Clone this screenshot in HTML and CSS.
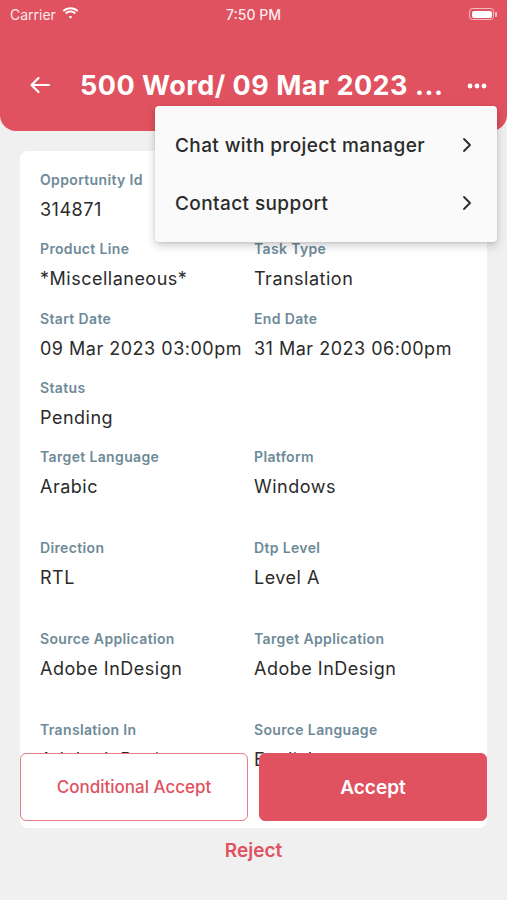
FILE: index.html
```html
<!DOCTYPE html>
<html>
<head>
<meta charset="utf-8">
<link rel="stylesheet" href="styles.css">
</head>
<body>
<div class="screen">
  <header class="header">
    <div class="statusbar">
      <div class="sb-left">Carrier
        <svg class="wifi" width="17" height="12" viewBox="0 0 17 12"><path d="M8.5 2.2c2.5 0 4.8 1 6.5 2.6l1.3-1.4C14.3 1.4 11.5.2 8.5.2S2.7 1.4.7 3.4L2 4.8C3.7 3.2 6 2.2 8.5 2.2z" fill="#fff"/><path d="M8.5 5.6c1.6 0 3 .6 4.1 1.6l1.3-1.4C12.5 4.5 10.6 3.6 8.5 3.6S4.5 4.5 3.1 5.8l1.3 1.4c1.1-1 2.5-1.6 4.1-1.6z" fill="#fff"/><path d="M8.5 8.9c.8 0 1.4.3 1.9.7L8.5 11.8 6.6 9.6c.5-.4 1.1-.7 1.9-.7z" fill="#fff"/></svg>
      </div>
      <div class="sb-time">7:50 PM</div>
      <div class="sb-right">
        <span class="battery"><span class="battery-fill"></span></span><span class="battery-tip"></span>
      </div>
    </div>
    <div class="navbar">
      <svg class="back" width="22" height="18" viewBox="0 0 22 18"><path d="M20 9H2.5M9.5 2L2.5 9l7 7" stroke="#fff" stroke-width="2.2" fill="none" stroke-linecap="round" stroke-linejoin="round"/></svg>
      <h1 class="title">500 Word/ 09 Mar 2023 ...</h1>
      <svg class="more" width="20" height="6" viewBox="0 0 20 6"><circle cx="3" cy="3" r="2.4" fill="#fff"/><circle cx="10" cy="3" r="2.4" fill="#fff"/><circle cx="17" cy="3" r="2.4" fill="#fff"/></svg>
    </div>
  </header>

  <main class="content">
    <div class="card">
      <div class="fields">
        <div class="field"><div class="label">Opportunity Id</div><div class="value">314871</div></div>
        <div class="field"></div>
        <div class="field"><div class="label">Product Line</div><div class="value">*Miscellaneous*</div></div>
        <div class="field"><div class="label">Task Type</div><div class="value">Translation</div></div>
        <div class="field"><div class="label">Start Date</div><div class="value">09 Mar 2023 03:00pm</div></div>
        <div class="field"><div class="label">End Date</div><div class="value">31 Mar 2023 06:00pm</div></div>
        <div class="field"><div class="label">Status</div><div class="value">Pending</div></div>
        <div class="field"></div>
        <div class="field tall"><div class="label">Target Language</div><div class="value">Arabic</div></div>
        <div class="field tall"><div class="label">Platform</div><div class="value">Windows</div></div>
        <div class="field tall"><div class="label">Direction</div><div class="value">RTL</div></div>
        <div class="field tall"><div class="label">Dtp Level</div><div class="value">Level A</div></div>
        <div class="field tall"><div class="label">Source Application</div><div class="value">Adobe InDesign</div></div>
        <div class="field tall"><div class="label">Target Application</div><div class="value">Adobe InDesign</div></div>
        <div class="field tall"><div class="label">Translation In</div><div class="value">Adobe InDesign</div></div>
        <div class="field tall"><div class="label">Source Language</div><div class="value">English</div></div>
      </div>
      <div class="actions">
        <button class="btn btn-outline">Conditional Accept</button>
        <button class="btn btn-fill">Accept</button>
      </div>
    </div>
    <div class="reject">Reject</div>
  </main>

  <div class="menu">
    <div class="menu-item"><span>Chat with project manager</span>
      <svg width="10" height="16" viewBox="0 0 10 16"><path d="M2 2l6 6-6 6" stroke="#2b2b2b" stroke-width="1.8" fill="none" stroke-linecap="round" stroke-linejoin="round"/></svg>
    </div>
    <div class="menu-item"><span>Contact support</span>
      <svg width="10" height="16" viewBox="0 0 10 16"><path d="M2 2l6 6-6 6" stroke="#2b2b2b" stroke-width="1.8" fill="none" stroke-linecap="round" stroke-linejoin="round"/></svg>
    </div>
  </div>
</div>
</body>
</html>
```

FILE: styles.css
```css
* { box-sizing: border-box; }
html, body { margin: 0; padding: 0; }
body {
  background: #f0f0f0;
  font-family: Inter, "Noto Sans", sans-serif;
  color: #2b2b2b;
}
.screen {
  position: relative;
  width: 507px;
  height: 900px;
  overflow: hidden;
  background: #f0f0f0;
}
.header {
  background: #e0525f;
  height: 131px;
  border-radius: 0 0 16px 16px;
  color: #fff;
}
.statusbar {
  height: 28px;
  display: flex;
  align-items: center;
  justify-content: space-between;
  padding: 0 10px 0 10px;
  font-size: 14px;
  color: rgba(255,255,255,0.9);
  position: relative;
}
.sb-left { display: flex; align-items: center; gap: 6px; }
.wifi { margin-top: -2px; }
.sb-time {
  position: absolute;
  left: 0; right: 0;
  text-align: center;
  font-weight: 500;
}
.sb-right { display: flex; align-items: center; }
.battery {
  width: 25px; height: 12px;
  border: 1px solid rgba(255,255,255,0.6);
  border-radius: 3.5px;
  padding: 1.5px;
  display: flex;
}
.battery-fill { flex: 1; background: #fff; border-radius: 2px; }
.battery-tip {
  width: 2px; height: 5px;
  background: rgba(255,255,255,0.6);
  border-radius: 0 1px 1px 0;
  margin-left: 1px;
}
.navbar {
  display: flex;
  align-items: center;
  height: 58px;
  padding: 56px 20px 0 29px;
}
.back { flex: none; }
.title {
  margin: 0 0 0 29px;
  font-size: 27px;
  font-weight: 700;
  letter-spacing: 0.5px;
  flex: 1;
  white-space: nowrap;
}
.more { flex: none; margin-top: 2px; }

.content {
  padding: 20px 20px 0 20px;
}
.card {
  position: relative;
  background: #fff;
  border-radius: 8px;
  height: 677px;
  overflow: hidden;
}
.fields {
  display: grid;
  grid-template-columns: 214px 1fr;
  padding: 20px 20px 0 20px;
}
.field { height: 69.3px; }
.field.tall { height: 91px; }
.label {
  font-size: 14px;
  font-weight: 600;
  color: #6e8a98;
  line-height: 17px;
  letter-spacing: 0.35px;
}
.value {
  font-size: 18px;
  color: #2b2b2b;
  margin-top: 11px;
  line-height: 22px;
  letter-spacing: 0.5px;
}
.actions {
  position: absolute;
  left: 0; right: 0; bottom: 7px;
  display: grid;
  grid-template-columns: 1fr 1fr;
  gap: 11px;
}
.btn {
  height: 68px;
  border-radius: 6px;
  font-family: inherit;
  font-size: 17px;
  font-weight: 500;
  cursor: pointer;
}
.btn-outline {
  background: #fff;
  border: 1.5px solid #e57b85;
  color: #e0525f;
}
.btn-fill {
  background: #e0525f;
  border: 1.5px solid #e0525f;
  color: #fff;
  font-size: 19px;
  font-weight: 600;
}
.reject {
  text-align: center;
  color: #e0525f;
  font-size: 19px;
  font-weight: 600;
  margin-top: 11px;
}

.menu {
  position: absolute;
  left: 155px;
  top: 106px;
  width: 342px;
  height: 136px;
  background: #fafafa;
  border-radius: 4px;
  box-shadow: 0 4px 10px rgba(0,0,0,0.18), 0 1px 3px rgba(0,0,0,0.1);
  padding: 10px 0;
}
.menu-item {
  height: 58px;
  display: flex;
  align-items: center;
  justify-content: space-between;
  padding: 0 25px 0 20px;
  font-size: 19px;
  font-weight: 500;
  letter-spacing: 0.4px;
  color: #2b2b2b;
}
```
